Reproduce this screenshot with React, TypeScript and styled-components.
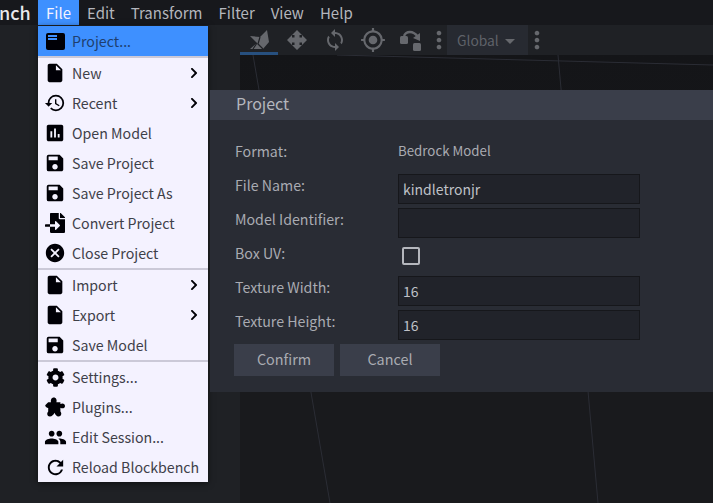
import { Fragment } from 'react';
import styled, { createGlobalStyle } from 'styled-components';
import {
  MdAssessment,
  MdCancel,
  MdGpsFixed,
  MdHistory,
  MdInsertDriveFile,
  MdMoreVert,
  MdPeople,
  MdRefresh,
  MdSave,
  MdSync,
} from 'react-icons/md';
import { FaChevronRight, FaCog, FaFileImport } from 'react-icons/fa';

const GlobalStyle = createGlobalStyle`
  html, body {
    margin: 0;
    height: 100%;
    overflow: hidden;
    background: #17181c;
  }
  body, input, button {
    font-family: "Noto Sans CJK JP", "Noto Sans", sans-serif;
  }
`;

const Page = styled.div`
  position: relative;
  width: 713px;
  height: 503px;
  display: flex;
  flex-direction: column;
  overflow: hidden;
`;

const MenuBar = styled.div`
  height: 25px;
  flex: none;
  display: flex;
  background: #17181c;
  font-size: 15px;
  line-height: 25px;
  color: #b4b6bd;
`;

const Logo = styled.div`
  width: 38px;
  font-size: 18px;
  font-weight: 500;
  color: #e8e8ec;
  box-sizing: border-box;
  margin-left: -1px;
  margin-right: 1px;
`;

const MenuTitle = styled.div<{ $open?: boolean }>`
  padding: 0 8px;
  background: ${(p) => (p.$open ? '#3e90ff' : 'transparent')};
  color: ${(p) => (p.$open ? '#f4f2ff' : '#b4b6bd')};
`;

const Workspace = styled.div`
  flex: 1;
  display: flex;
  min-height: 0;
`;

const LeftPanel = styled.div`
  width: 240px;
  flex: none;
  background: #1f2125;
`;

const Main = styled.div`
  flex: 1;
  display: flex;
  flex-direction: column;
  min-width: 0;
`;

const Toolbar = styled.div`
  height: 30px;
  flex: none;
  display: flex;
  align-items: center;
  background: #1f2125;
  color: #66686d;
`;

const Tool = styled.div<{ $active?: boolean }>`
  width: 38px;
  height: 30px;
  box-sizing: border-box;
  display: flex;
  align-items: center;
  justify-content: center;
  border-bottom: 3px solid ${(p) => (p.$active ? '#27507f' : 'transparent')};
  padding-top: 3px;
`;

const ToolDots = styled.div`
  width: 17px;
  height: 30px;
  display: flex;
  align-items: center;
  justify-content: center;
  svg {
    flex: none;
  }
`;

const SpaceSelect = styled.div`
  width: 81px;
  height: 30px;
  box-sizing: border-box;
  padding-left: 10px;
  display: flex;
  align-items: center;
  gap: 6px;
  background: #272a31;
  color: #5f6269;
  font-size: 13.8px;
`;

const Caret = styled.span`
  width: 0;
  height: 0;
  margin-top: 2px;
  border-left: 5px solid transparent;
  border-right: 5px solid transparent;
  border-top: 5px solid #66686d;
`;

const Canvas = styled.div`
  flex: 1;
  background: linear-gradient(#141518, #191a1d 70%);
`;

const CanvasLines = styled.svg`
  display: block;
  width: 100%;
  height: 100%;
`;

const Dropdown = styled.div`
  position: absolute;
  left: 38px;
  top: 26px;
  width: 170px;
  background: #f4f2ff;
  box-shadow: 0 1px 6px rgba(0, 0, 0, 0.55);
  font-size: 14.2px;
`;

const Item = styled.div<{ $active?: boolean }>`
  height: 30px;
  display: flex;
  align-items: center;
  background: ${(p) => (p.$active ? '#3e90ff' : 'transparent')};
  color: ${(p) => (p.$active ? '#1f3f6e' : '#3e4049')};
  white-space: nowrap;
`;

const ItemIcon = styled.span`
  width: 34px;
  height: 30px;
  flex: none;
  display: flex;
  align-items: center;
  justify-content: center;
  color: #000006;
`;

const ItemArrow = styled.span`
  margin-left: auto;
  margin-right: 8px;
  display: flex;
  color: #000006;
`;

const Separator = styled.div`
  height: 2px;
  background: #cbc9d8;
`;

const Dialog = styled.div`
  position: absolute;
  left: 210px;
  top: 90px;
  width: 503px;
  height: 302px;
  background: #292c34;
  color: #a9abb2;
  font-size: 14.2px;
`;

const DialogTitle = styled.div`
  height: 30px;
  padding-left: 26px;
  background: #3a3e4a;
  color: #b4b6bd;
  font-size: 16px;
  line-height: 27px;
`;

const DialogBody = styled.div`
  padding: 14px 0 0 24px;
`;

const Row = styled.div`
  height: 34px;
  display: flex;
  align-items: flex-start;
  padding-left: 1px;
`;

const FormatRow = styled(Row)`
  height: 40px;
  padding-top: 6px;
  box-sizing: border-box;
`;

const Label = styled.label`
  width: 163px;
  flex: none;
  line-height: 20px;
  padding-top: 1px;
`;

const Static = styled.span`
  font-size: 13.3px;
  line-height: 20px;
  padding-top: 1px;
`;

const TextInput = styled.input`
  width: 242px;
  height: 30px;
  box-sizing: border-box;
  padding: 0 4px;
  background: #21232a;
  border: 1px solid #16171b;
  outline: none;
  color: #bfc1c7;
  font-size: 14px;
`;

const Check = styled.span`
  width: 18px;
  height: 18px;
  margin: 5px 0 0 4px;
  box-sizing: border-box;
  border: 2px solid #b5b7bd;
  border-radius: 2px;
  background: #292c34;
`;

const Buttons = styled.div`
  display: flex;
  gap: 6px;
`;

const Button = styled.button`
  width: 100px;
  height: 32px;
  padding: 0 0 4px;
  border: none;
  background: #3a3e4a;
  color: #a9abb2;
  font-size: 14.4px;
`;

const ProjectIcon = () => (
  <svg width="19" height="17" viewBox="0 0 19 17">
    <rect width="19" height="17" rx="2" fill="#000006" />
    <rect x="2" y="2" width="9" height="2" fill="#3e90ff" />
    <rect x="2" y="5" width="9" height="2" fill="#3e90ff" />
  </svg>
);

const PluginIcon = () => (
  <svg width="20" height="20" viewBox="0 0 20 20" fill="currentColor">
    <path d="M6 5.2C5.4 2.8 6.6.5 8.8.5S12.2 2.8 11.4 5.2H15.4V7C17.8 5.8 20 6.8 20 8.9S17.8 12 15.4 10.8V14.5C17 16 16.5 19.5 13.5 19.5 11.5 19.5 10.4 17.8 9.5 15.8 8.6 17.8 7 19.5 4.8 19.5 2 19.5 1.6 16 3.2 14.5V11C1.6 10.6.2 9.5.2 8.2 1.2 7 2.2 6.2 3.2 5.2Z" />
  </svg>
);

const MENU = [
  [{ label: 'Project...', icon: <ProjectIcon />, active: true }],
  [
    { label: 'New', icon: <MdInsertDriveFile size={22} />, sub: true },
    { label: 'Recent', icon: <MdHistory size={22} />, sub: true },
    { label: 'Open Model', icon: <MdAssessment size={22} /> },
    { label: 'Save Project', icon: <MdSave size={22} /> },
    { label: 'Save Project As', icon: <MdSave size={22} /> },
    { label: 'Convert Project', icon: <FaFileImport size={20} /> },
    { label: 'Close Project', icon: <MdCancel size={22} /> },
  ],
  [
    { label: 'Import', icon: <MdInsertDriveFile size={22} />, sub: true },
    { label: 'Export', icon: <MdInsertDriveFile size={22} />, sub: true },
    { label: 'Save Model', icon: <MdSave size={22} /> },
  ],
  [
    { label: 'Settings...', icon: <FaCog size={19} /> },
    { label: 'Plugins...', icon: <PluginIcon /> },
    { label: 'Edit Session...', icon: <MdPeople size={23} /> },
    { label: 'Reload Blockbench', icon: <MdRefresh size={23} /> },
  ],
];

const FIELDS = [
  { label: 'File Name:', value: 'kindletronjr' },
  { label: 'Model Identifier:', value: '' },
  { label: 'Box UV:', check: true },
  { label: 'Texture Width:', value: '16' },
  { label: 'Texture Height:', value: '16' },
];

const MoveIcon = () => (
  <svg width="22" height="24" viewBox="0 0 22 24" fill="currentColor">
    <path d="M19 2 21 14 15 21H2L9 15 2 8 12 9Z" />
    <path d="M12 9 10 16 15 21M9 15 5 21" stroke="#1f2125" strokeWidth="1.2" fill="none" />
  </svg>
);

const ArrowsIcon = () => (
  <svg width="20" height="20" viewBox="0 0 20 20" fill="currentColor">
    <path d="M10 0 15 5H12.5V7.5H15V5L20 10 15 15V12.5H12.5V15H15L10 20 5 15H7.5V12.5H5V15L0 10 5 5V7.5H7.5V5H5Z" />
  </svg>
);

const BendIcon = () => (
  <svg width="24" height="22" viewBox="0 0 24 22" fill="currentColor">
    <rect x="1" y="7" width="8" height="8" rx="1.5" />
    <rect x="14" y="14" width="8" height="8" rx="1.5" />
    <path d="M5 7C7 2 14 1 19 8" fill="none" stroke="currentColor" strokeWidth="2.4" />
    <path d="M14 9 21 12 21 4Z" />
  </svg>
);

const App = () => (
  <Page>
    <GlobalStyle />
    <MenuBar>
      <Logo>nch</Logo>
      <MenuTitle $open>File</MenuTitle>
      {['Edit', 'Transform', 'Filter', 'View', 'Help'].map((name) => (
        <MenuTitle key={name}>{name}</MenuTitle>
      ))}
    </MenuBar>

    <Workspace>
      <LeftPanel />
      <Main>
        <Toolbar>
          <Tool $active>
            <MoveIcon />
          </Tool>
          <Tool>
            <ArrowsIcon />
          </Tool>
          <Tool>
            <MdSync size={24} />
          </Tool>
          <Tool>
            <MdGpsFixed size={26} />
          </Tool>
          <Tool>
            <BendIcon />
          </Tool>
          <ToolDots>
            <MdMoreVert size={28} />
          </ToolDots>
          <SpaceSelect>
            Global
            <Caret />
          </SpaceSelect>
          <ToolDots>
            <MdMoreVert size={28} />
          </ToolDots>
        </Toolbar>
        <Canvas>
          <CanvasLines viewBox="0 0 473 448">
            <g stroke="#2b2d35" strokeWidth="1" fill="none">
              <path d="M13 0 90 448" />
              <path d="M318 0 358 448" />
              <path d="M97 0 473 10" />
            </g>
          </CanvasLines>
        </Canvas>
      </Main>
    </Workspace>

    <Dropdown>
      {MENU.map((group, idx) => (
        <Fragment key={idx}>
          {idx > 0 && <Separator />}
          {group.map((item) => (
            <Item key={item.label} $active={item.active}>
              <ItemIcon>{item.icon}</ItemIcon>
              {item.label}
              {item.sub && (
                <ItemArrow>
                  <FaChevronRight size={12} />
                </ItemArrow>
              )}
            </Item>
          ))}
        </Fragment>
      ))}
    </Dropdown>

    <Dialog>
      <DialogTitle>Project</DialogTitle>
      <DialogBody>
        <FormatRow>
          <Label>Format:</Label>
          <Static>Bedrock Model</Static>
        </FormatRow>
        {FIELDS.map((field) => (
          <Row key={field.label}>
            <Label>{field.label}</Label>
            {field.check ? <Check /> : <TextInput defaultValue={field.value} />}
          </Row>
        ))}
        <Buttons>
          <Button>Confirm</Button>
          <Button>Cancel</Button>
        </Buttons>
      </DialogBody>
    </Dialog>
  </Page>
);

export default App;
